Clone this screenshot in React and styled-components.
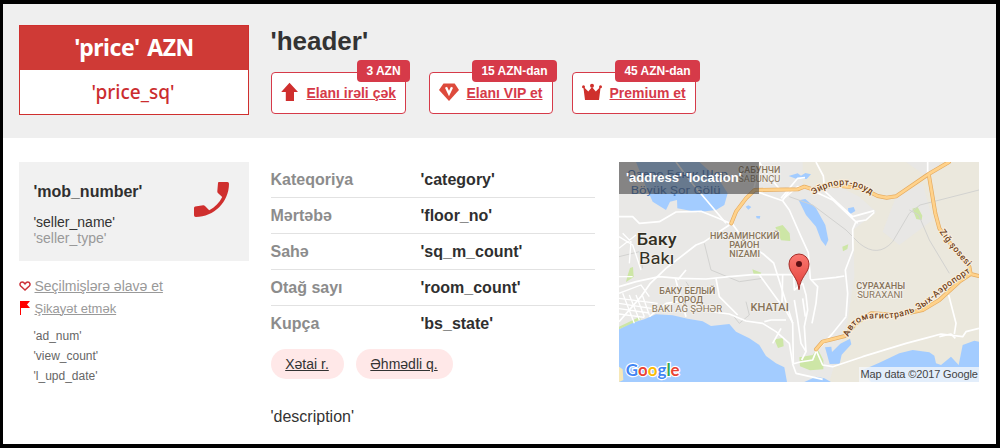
import React from "react";
import styled, { createGlobalStyle } from "styled-components";

const Global = createGlobalStyle`
  * { box-sizing: border-box; }
  body { margin: 0; background: #000; font-family: "Liberation Sans", Arial, sans-serif; color: #2f2f2f; }
  a { color: inherit; }
`;

const Frame = styled.div`
  width: 1000px;
  height: 448px;
  padding: 4px 4px 4px 3px;
  background: #000;
`;
const Page = styled.main`
  height: 440px;
  background: #fff;
  overflow: hidden;
`;
const Header = styled.header`
  display: flex;
  height: 134px;
  padding: 21px 16px 0;
  gap: 22px;
  background: #efefef;
`;
const PriceBox = styled.div`
  width: 230px;
  height: 90px;
  border: 1px solid #cf2f2e;
  background: #fff;
  text-align: center;
  font-family: "Noto Sans", "Open Sans", sans-serif;
`;
const Price = styled.div`
  height: 44px;
  line-height: 43px;
  background: #cf3a36;
  color: #fff;
  font-size: 23px;
  font-weight: 700;
  letter-spacing: -0.45px;
  word-spacing: 2px;
`;
const PriceSq = styled.div`
  height: 44px;
  padding-right: 2px;
  line-height: 44px;
  color: #cb2d2f;
  font-size: 19px;
  font-weight: 500;
`;
const Title = styled.h1`
  margin: 0 0 0 -0.5px;
  height: 47px;
  font-size: 26px;
  line-height: 33px;
  color: #333;
`;
const Promos = styled.div`
  display: flex;
`;
const Promo = styled.a`
  position: relative;
  display: flex;
  width: ${(p) => p.$width}px;
  height: 42px;
  margin-right: ${(p) => p.$after}px;
  padding: 0 0 0 9px;
  border: 1px solid #d63a49;
  border-radius: 4px;
  background: #fff;
  color: #d63a49;
  font-size: 14px;
  font-weight: bold;
  line-height: 40px;
`;
const PromoIcon = styled.span`
  display: block;
  width: 20px;
  height: 20px;
  margin: 9px ${(p) => p.$gap}px 0 0;
  svg { display: block; }
`;
const Badge = styled.span`
  position: absolute;
  top: -13px;
  right: -5px;
  width: ${(p) => p.$width}px;
  height: 22px;
  border-radius: 4px;
  background: #d63a49;
  color: #fff;
  font-size: 12px;
  line-height: 22px;
  text-align: center;
`;
const Body = styled.div`
  display: flex;
  padding: 24px 14px 0 16px;
`;
const Side = styled.aside`
  width: 230px;
  margin-right: 22px;
`;
const Seller = styled.div`
  display: flex;
  justify-content: space-between;
  height: 99px;
  padding: 20px 20px 0 14.4px;
  background: #f1f1f1;
`;
const Phone = styled.div`
  margin-bottom: 13px;
  font-size: 16px;
  font-weight: bold;
  line-height: 19px;
`;
const Person = styled.div`
  font-size: 14px;
  line-height: 16px;
  color: ${(p) => (p.$muted ? "#999" : "#333")};
`;
const Actions = styled.div`
  padding-top: 14px;
`;
const Action = styled.a`
  display: flex;
  align-items: center;
  height: 22px;
  gap: ${(p) => p.$gap}px;
  color: #999;
  font-size: ${(p) => p.$size}px;
`;
const Meta = styled.div`
  padding: 7px 0 0 14.5px;
  color: #666;
  font-size: 12px;
  line-height: 20px;
`;
const Details = styled.section`
  width: 324px;
  margin-right: 24px;
`;
const Row = styled.div`
  display: flex;
  height: 36px;
  border-bottom: 1px solid ${(p) => (p.$last ? "transparent" : "#e2e2e2")};
  font-size: 16px;
  font-weight: bold;
  line-height: 35px;
`;
const Label = styled.span`
  width: 150px;
  margin-left: -0.5px;
  color: #8c8c8c;
`;
const Tags = styled.div`
  display: flex;
  gap: 12px;
  margin-top: 7px;
`;
const Tag = styled.a`
  width: ${(p) => p.$width}px;
  height: 30px;
  padding-right: 1px;
  border-radius: 15px;
  background: #ffe8e8;
  color: #333;
  font-size: 14px;
  line-height: 30px;
  text-align: center;
`;
const Description = styled.p`
  margin: 28px 0 0 -0.5px;
  font-size: 16px;
  line-height: 19px;
  color: #333;
`;
const MapBox = styled.section`
  position: relative;
  width: 360px;
  height: 220px;
  overflow: hidden;
  svg { display: block; }
`;
const Address = styled.div`
  position: absolute;
  top: 0;
  left: 0;
  width: 140px;
  height: 32px;
  padding-left: 7px;
  background: rgba(60, 60, 60, 0.58);
  color: #fff;
  font-size: 13px;
  font-weight: bold;
  line-height: 32px;
  white-space: nowrap;
`;
const Credit = styled.div`
  position: absolute;
  right: 0;
  bottom: 0;
  width: 120px;
  height: 15px;
  padding-left: 1.5px;
  background: rgba(245, 247, 250, 0.78);
  color: #444;
  font-size: 11px;
  letter-spacing: -0.13px;
  line-height: 15px;
  white-space: nowrap;
`;

const ArrowIcon = () => (
  <svg width="20" height="20" viewBox="0 0 20 20">
    <path d="M8.5 .8 17 10h-4v9H4.8v-9H.2z" fill="#cf2f2e" />
  </svg>
);
const GemIcon = () => (
  <svg width="20" height="20" viewBox="0 0 20 20">
    <path d="M4.5 1.5h11.2L20 8 10 19 0 8z" fill="#dd4a3c" />
    <path d="m7 5.3 3 6.3 3-6.3" fill="none" stroke="#fff" strokeWidth="2.3" />
  </svg>
);
const CrownIcon = () => (
  <svg width="20" height="20" viewBox="0 0 20 20" fill="#cf302c">
    <path d="M1.3 4.5 6.3 9.5 10 5l3.8 4.5 4.9-5L17 18H3z" />
    <circle cx="1.5" cy="4.8" r="1.5" />
    <circle cx="10" cy="3.8" r="2" />
    <circle cx="18.5" cy="4.8" r="1.5" />
  </svg>
);
const PhoneIcon = () => (
  <svg width="35" height="35" viewBox="0 0 35 35">
    <path d="M25 0h8.4Q35 0 35 1.8C35 20 20 35 1.8 35Q0 35 0 33.2V26q0-1.2 1.2-1.5l8-1.3q1-.1 1.8.7l4.2 4.3c5.8-3 10.4-7.5 13-13.2L23.9 11q-.7-.7-.6-1.7L24 1.1Q24 0 25 0z" fill="#cf2f2e" />
  </svg>
);
const HeartIcon = () => (
  <svg width="12" height="10" viewBox="0 0 12 10">
    <path d="M6 9 1.7 5C.3 3.4 1.1 1 3.2 1 4.6 1 5.4 2 6 2.9 6.6 2 7.4 1 8.8 1c2.1 0 2.9 2.4 1.5 4z" fill="#fff" stroke="#cc3038" strokeWidth="1.5" />
  </svg>
);
const FlagIcon = () => (
  <svg width="11" height="14" viewBox="0 0 11 14">
    <path d="M1 0h10L8 3.5 11 7H2v7H1z" fill="#f00" />
  </svg>
);

const land = {
  country: "M560 6H1089V666H640L695 480 704 420 715 350 712 210 780 155 730 110 660 75 560 80z",
  town: "M870 6h100v30l-40 12zM840 110 920 70 950 180 850 255 800 215z",
  sea: "M9 508 45 490 85 478 120 463 170 466 215 476 260 484 285 498 340 492 360 515 400 535 430 555 450 588 480 610 505 622 513 666H9zM765 666 735 632 790 608 850 580 890 570 940 577 955 587 960 610 975 615 1005 590 1028 615 1040 555 1075 542 1089 545V666zM600 650l25 5 20 11h-80z",
  lakes: "M60 6 90 80 110 125 150 150 162 125 183 120 184 145 245 157 300 150 325 135 335 100 310 60 250 6zM548 121 568 117 600 145 628 195 637 240 629 258 615 240 600 200 570 165zM518 48 545 40 555 47 568 39 585 43 572 57 540 56zM696 145l17-4 5 12-20 12zM389 140l8-4 9 5-9 8zM420 168h13l-2 8-9-1zM627 562l19-2 2 16 25-25 29-15 4 17-29 31-6 27-30 1z",
  parks: "M478 202 500 195 521 220 523 243 495 241zM889 146l16-5 14 26-2 13-16-3zM679 260l18-7-3 14-13 7zM409 328l27 10-4 8-19-3zM42 324l9-3 2 30-23 15 5-20zM475 538l26-4 2 25-17 5zM550 592 590 585 604 565 622 600V628l-40 3-30-12zM9 500 70 471 75 478 9 508z"
};
const streets = [
  "M9 170 50 170 70 190 130 185 180 156 255 154 300 172 350 193 377 230 403 257 442 282 473 309 530 490",
  "M340 195 265 245 240 255 150 325 103 370 75 410 9 485",
  "M413 92 430 6M413 92 500 122 520 150 555 230 577 278 583 357M500 122 510 105 525 85",
  "M495 92 455 45 430 6M585 88 545 80 500 118M567 53 545 55 495 115",
  "M585 88 620 88 710 170 775 152M575 85 650 120 725 190",
  "M775 157 750 180 720 185 710 208 711 270 688 330 695 400 690 470",
  "M9 380 60 365 130 350 190 355 270 357 340 350 410 344 560 344",
  "M100 470 150 430 220 420 285 455 340 462 390 483 440 490 480 515 520 550 530 610",
  "M500 344 498 430 530 488 532 610M445 485 465 480 510 480",
  "M430 344 500 440M300 355 310 410 365 465M185 360 210 330M178 355 210 470",
  "M533 344 535 390 560 370 570 405 575 450 565 500 570 575 557 600",
  "M583 357 605 380 600 430 588 490M585 360 660 352 685 348",
  "M690 470 650 520 600 575 590 600 552 606 530 612 540 640 620 658",
  "M600 570 620 615 650 620 740 590 870 550 935 533 975 522 1040 530 1050 515 1089 505",
  "M970 530 1005 522 1018 535M998 405 1020 490 1015 522M935 6 935 45",
  "M600 6 622 48 625 80M180 6 220 60 330 190",
  "M535 420 545 480 555 550 570 575M560 415 568 470M495 505 470 550"
];
const lanes = "M9 415 125 430M9 430 110 446M9 446 100 459M9 462 85 472M20 400 55 490M40 405 70 480M60 405 85 470M78 403 100 465M9 230 50 255 75 330M20 220 45 245 40 310M9 265 60 225M9 400 75 375 100 410M9 350 50 350";
const rails = "M520 110 590 135 690 210 730 250Q785 295 830 245L880 160 912 135 1089 90M880 150 908 165 940 240 1000 340M390 425 400 465 370 490 350 465M210 365 250 430M9 290 70 275 80 325M265 250 285 330 370 365 440 355";
const highway = "M346 190 360 155 390 115 416 90 545 88 565 80 590 88 655 76 740 85 785 108 812 113 840 109 938 42 999 6M938 42 947 95 958 160 970 205 1010 260 1060 320 1064 342 1089 348M1064 342 1030 365 970 420 920 450 850 465 765 460 720 490 687 528 620 545 600 568";
const placeFont = 'Roboto, "Noto Sans", sans-serif';

function Place({ x, y, width, size = 25, weight = 500, color = "#87745a", halo = 5, children }) {
  return (
    <text x={x} y={y} textLength={width} lengthAdjust="spacingAndGlyphs" textAnchor="middle" fontFamily={placeFont} fontSize={size} fontWeight={weight} fill={color} stroke="#f3f1ed" strokeWidth={halo} paintOrder="stroke">{children}</text>
  );
}

function CityMap() {
  return (
    <svg width="360" height="220" viewBox="9 6 1080 660">
      <defs>
        <path id="airport" d="M592 105Q680 48 762 102" />
        <path id="zigh" d="M970 215Q1006 268 1057 322" />
        <path id="suraxani" d="M697 531Q718 472 785 475C880 480 935 438 985 390L1066 335" />
        <linearGradient id="pin" x2="0" y2="1"><stop stopColor="#fa7770" /><stop offset="1" stopColor="#e34139" /></linearGradient>
      </defs>
      <path d="M9 6h1080v660H9z" fill="#e9e8e6" />
      <path d={land.country} fill="#ebe8dd" />
      <path d={land.town} fill="#e8e7e5" />
      <path d={land.sea} fill="#a3ccff" />
      <path d={land.lakes} fill="#a3ccff" />
      <path d={land.parks} fill="#cde6a6" />
      <path d="M9 620 20 628 22 660 9 666z" fill="#f7e8b7" />
      <path d={rails} fill="none" stroke="#d2d2d0" strokeWidth="3" />
      <path d={lanes} fill="none" stroke="#fff" strokeWidth="4" />
      {streets.map((d) => <path key={d} d={d} fill="none" stroke="#fff" strokeWidth="5" strokeLinejoin="round" />)}
      <path d={highway} fill="none" stroke="#e5ab60" strokeWidth="12" strokeLinejoin="round" strokeLinecap="round" />
      <path d={highway} fill="none" stroke="#ffd28b" strokeWidth="8" strokeLinejoin="round" strokeLinecap="round" />

      <Place x={185} y={53} width={302} size={32} weight={400} color="#3f73bd" halo={0}>Озеро Беюк Шор</Place>
      <Place x={179} y={103} width={270} size={35} weight={400} color="#3f73bd" halo={0}>Böyük Şor Gölü</Place>
      <Place x={430} y={39} width={126}>САБУНЧИ</Place>
      <Place x={430} y={66} width={126} weight={400}>SABUNÇU</Place>
      <Place x={122} y={256} width={120} size={50} weight={500} color="#333024">Баку</Place>
      <Place x={122} y={311} width={106} size={48} weight={400} color="#333024">Bakı</Place>
      <Place x={386} y={236} width={208}>НИЗАМИНСКИЙ</Place>
      <Place x={385} y={264} width={91}>РАЙОН</Place>
      <Place x={386} y={291} width={92}>NIZAMI</Place>
      <Place x={214} y={402} width={168}>БАКУ БЕЛЫЙ</Place>
      <Place x={216} y={430} width={90}>ГОРОД</Place>
      <Place x={213} y={456} width={211} weight={400}>BAKI AĞ ŞƏHƏR</Place>
      <Place x={461} y={452} width={115} size={31}>KHATAI</Place>
      <Place x={794} y={387} width={147}>СУРАХАНЫ</Place>
      <Place x={792} y={414} width={137} weight={400}>SURAXANI</Place>
      <g fill="#70441e" stroke="#fbefdc" strokeWidth="6" paintOrder="stroke" fontFamily={placeFont} fontSize="27" fontWeight="500">
        <text textLength="185"><textPath href="#airport">Эйрпорт-роуд</textPath></text>
        <text textLength="136"><textPath href="#zigh">Zığ şosesi</textPath></text>
        <text textLength="433"><textPath href="#suraxani">Автомагистраль Зых-Аэропорт</textPath></text>
      </g>
      <path d="M549 389C545 349 519 340 519 312a30 30 0 0 1 60 0C579 340 553 349 549 389z" fill="url(#pin)" stroke="#a52e29" strokeWidth="3" />
      <circle cx="549" cy="312" r="9" fill="#5d1014" />
      <text x="29" y="647" textLength="162" lengthAdjust="spacingAndGlyphs" fontFamily='Lato, "Open Sans", sans-serif' fontSize="52" fontWeight="700" stroke="#fff" strokeWidth="7" paintOrder="stroke">
        <tspan fill="#4285f4">G</tspan><tspan fill="#ea4335">o</tspan><tspan fill="#fbbc05">o</tspan><tspan fill="#4285f4">g</tspan><tspan fill="#34a853">l</tspan><tspan fill="#ea4335">e</tspan>
      </text>
    </svg>
  );
}

const promos = [
  { text: "Elanı irəli çək", price: "3 AZN", width: 135, badge: 53, gap: 5.5, after: 23, icon: <ArrowIcon /> },
  { text: "Elanı VIP et", price: "15 AZN-dan", width: 124, badge: 85, gap: 7.5, after: 19, icon: <GemIcon /> },
  { text: "Premium et", price: "45 AZN-dan", width: 124, badge: 85, gap: 7.5, after: 0, icon: <CrownIcon /> }
];
const rows = [
  ["Kateqoriya", "'category'"],
  ["Mərtəbə", "'floor_no'"],
  ["Sahə", "'sq_m_count'"],
  ["Otağ sayı", "'room_count'"],
  ["Kupça", "'bs_state'"]
];

export default function App() {
  return (
    <Frame>
      <Global />
      <Page>
        <Header>
          <PriceBox><Price>'price' AZN</Price><PriceSq>'price_sq'</PriceSq></PriceBox>
          <div>
            <Title>'header'</Title>
            <Promos>
              {promos.map((p) => (
                <Promo key={p.text} href="#" $width={p.width} $after={p.after}>
                  <PromoIcon $gap={p.gap}>{p.icon}</PromoIcon>{p.text}
                  <Badge $width={p.badge}>{p.price}</Badge>
                </Promo>
              ))}
            </Promos>
          </div>
        </Header>
        <Body>
          <Side>
            <Seller>
              <div>
                <Phone>'mob_number'</Phone>
                <Person>'seller_name'</Person>
                <Person $muted>'seller_type'</Person>
              </div>
              <PhoneIcon />
            </Seller>
            <Actions>
              <Action href="#" $gap={3.5} $size={14}><HeartIcon />Seçilmişlərə əlavə et</Action>
              <Action href="#" $gap={4.5} $size={13}><FlagIcon />Şikayət etmək</Action>
            </Actions>
            <Meta>
              <div>'ad_num'</div>
              <div>'view_count'</div>
              <div>'l_upd_date'</div>
            </Meta>
          </Side>
          <Details>
            {rows.map(([label, value], i) => (
              <Row key={label} $last={i === rows.length - 1}><Label>{label}</Label>{value}</Row>
            ))}
            <Tags><Tag href="#" $width={73}>Xətai r.</Tag><Tag href="#" $width={97}>Əhmədli q.</Tag></Tags>
            <Description>'description'</Description>
          </Details>
          <MapBox>
            <CityMap />
            <Address>'address' 'location'</Address>
            <Credit>Map data ©2017 Google</Credit>
          </MapBox>
        </Body>
      </Page>
    </Frame>
  );
}
